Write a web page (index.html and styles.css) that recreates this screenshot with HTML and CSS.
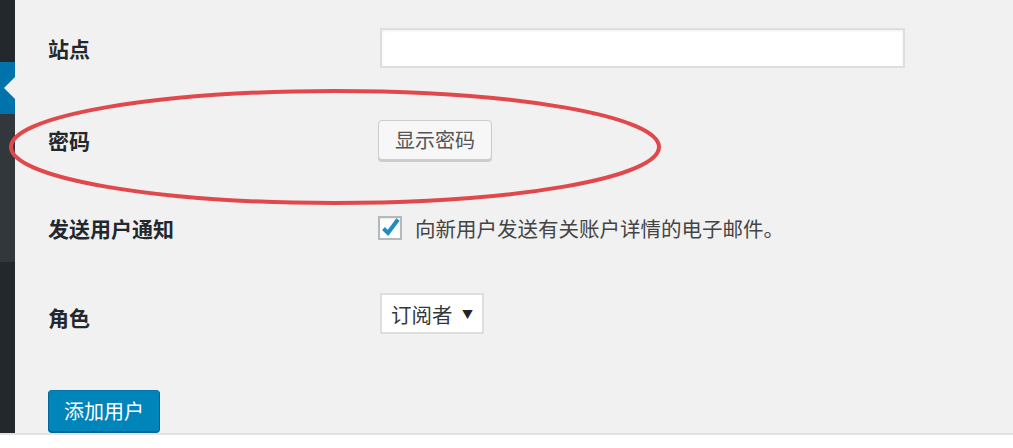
FILE: index.html
```html
<html lang="zh-CN">
<head>
    <meta charset="utf-8" />
    <title>添加用户</title>
    <link rel="stylesheet" href="styles.css">
</head>
<body>
    <div class="screen">
        <aside class="sidebar">
            <div class="menu-top"></div>
            <div class="menu-current"><span class="arrow"></span></div>
            <div class="menu-sub"></div>
            <div class="menu-rest"></div>
        </aside>

        <main class="content">
            <form class="user-form" action="" method="post">
                <div class="row row-first">
                    <label class="row-label" for="url">站点</label>
                    <div class="row-field">
                        <input type="text" id="url" name="url" class="field-text" />
                    </div>
                </div>
                <div class="row">
                    <label class="row-label">密码</label>
                    <div class="row-field">
                        <button type="button" class="btn">显示密码</button>
                    </div>
                </div>
                <div class="row">
                    <label class="row-label">发送用户通知</label>
                    <div class="row-field">
                        <label class="check-line">
                            <span class="check-box">
                                <svg width="20" height="20" viewBox="0 0 20 20">
                                    <polyline points="3.5,10.5 8,15 18,1.5" fill="none" stroke="#1e8cbe" stroke-width="4" stroke-linejoin="miter" />
                                </svg>
                            </span>
                            <span class="check-text">向新用户发送有关账户详情的电子邮件。</span>
                        </label>
                    </div>
                </div>
                <div class="row row-role">
                    <label class="row-label">角色</label>
                    <div class="row-field">
                        <div class="select-box">
                            <span>订阅者</span>
                            <span class="select-arrow">▼</span>
                        </div>
                    </div>
                </div>
                <div class="submit">
                    <button type="submit" class="btn btn-primary">添加用户</button>
                </div>
            </form>
        </main>

        <svg class="mark" width="1013" height="448" viewBox="0 0 1013 448">
            <ellipse cx="335" cy="147" rx="324" ry="56" fill="none" stroke="#e0484b" stroke-width="4" />
        </svg>
    </div>
</body>
</html>
```

FILE: styles.css
```css
*
{
    box-sizing: border-box;
    margin: 0;
    padding: 0;
}

body
{
    background: #fff;
    font-family: "Noto Sans CJK SC", "Liberation Sans", sans-serif;
}

.screen
{
    position: relative;
    display: flex;
    height: 435px;
    background: #f1f1f1;
    border-bottom: 2px solid #e2e2e2;
    overflow: hidden;
}

/* admin menu strip */
.sidebar
{
    display: flex;
    flex-direction: column;
    width: 15px;
    flex-shrink: 0;
}

.menu-top
{
    height: 62px;
    background: #23282d;
}

.menu-current
{
    display: flex;
    align-items: center;
    justify-content: flex-end;
    height: 52px;
    background: #0073aa;
}

.arrow
{
    width: 0;
    height: 0;
    border-top: 11px solid transparent;
    border-bottom: 11px solid transparent;
    border-right: 11px solid #f1f1f1;
}

.menu-sub
{
    height: 148px;
    background: #32373c;
}

.menu-rest
{
    flex: 1;
    background: #23282d;
}

.content
{
    flex: 1;
    padding-left: 33px;
}

.row
{
    display: grid;
    grid-template-columns: 330px 1fr;
    align-items: center;
    height: 88px;
}

.row-first
{
    height: 96px;
}

.row-label
{
    padding-top: 0;
    color: #23282d;
    font-size: 21px;
    font-weight: bold;
    line-height: 28px;
}

.row-role .row-label
{
    padding-top: 2px;
}

.row-field
{
    display: flex;
    align-items: center;
}

.field-text
{
    width: 525px;
    height: 40px;
    margin-left: 2px;
    background: #fff;
    border: 2px solid #dedede;
    box-shadow: inset 0 1px 3px rgba(0,0,0,.07);
    font-size: 20px;
    outline: none;
}

.btn
{
    height: 40px;
    padding: 0 16px;
    background: #f7f7f7;
    border: 1px solid #cccccc;
    border-radius: 4px;
    box-shadow: 0 2px 0 #cccccc;
    color: #555;
    font-family: inherit;
    font-size: 20px;
    line-height: 36px;
    cursor: pointer;
}

.check-line
{
    display: flex;
    align-items: center;
    color: #444;
    font-size: 20.5px;
    line-height: 28px;
    cursor: pointer;
}

.check-box
{
    display: flex;
    align-items: center;
    justify-content: center;
    width: 24px;
    height: 24px;
    margin-right: 13px;
    background: #fff;
    border: 2px solid #b4b9be;
    box-shadow: inset 0 1px 2px rgba(0,0,0,.1);
}

.select-box
{
    display: flex;
    align-items: center;
    justify-content: space-between;
    width: 104px;
    height: 41px;
    margin-left: 2px;
    margin-top: -5px;
    padding: 0 9px 0 9px;
    background: #fff;
    border: 2px solid #dedede;
    color: #32373c;
    font-size: 20.5px;
}

.select-arrow
{
    font-size: 11px;
    color: #222;
}

.submit
{
    padding-top: 30px;
}

.btn-primary
{
    height: 42px;
    padding: 0 15px;
    background: #0085ba;
    border-color: #0073aa #006799 #006799;
    box-shadow: 0 1px 0 #006799;
    color: #fff;
    line-height: 38px;
}

/* hand drawn highlight on top of the form */
.mark
{
    position: absolute;
    top: 0;
    left: 0;
    pointer-events: none;
}
```
